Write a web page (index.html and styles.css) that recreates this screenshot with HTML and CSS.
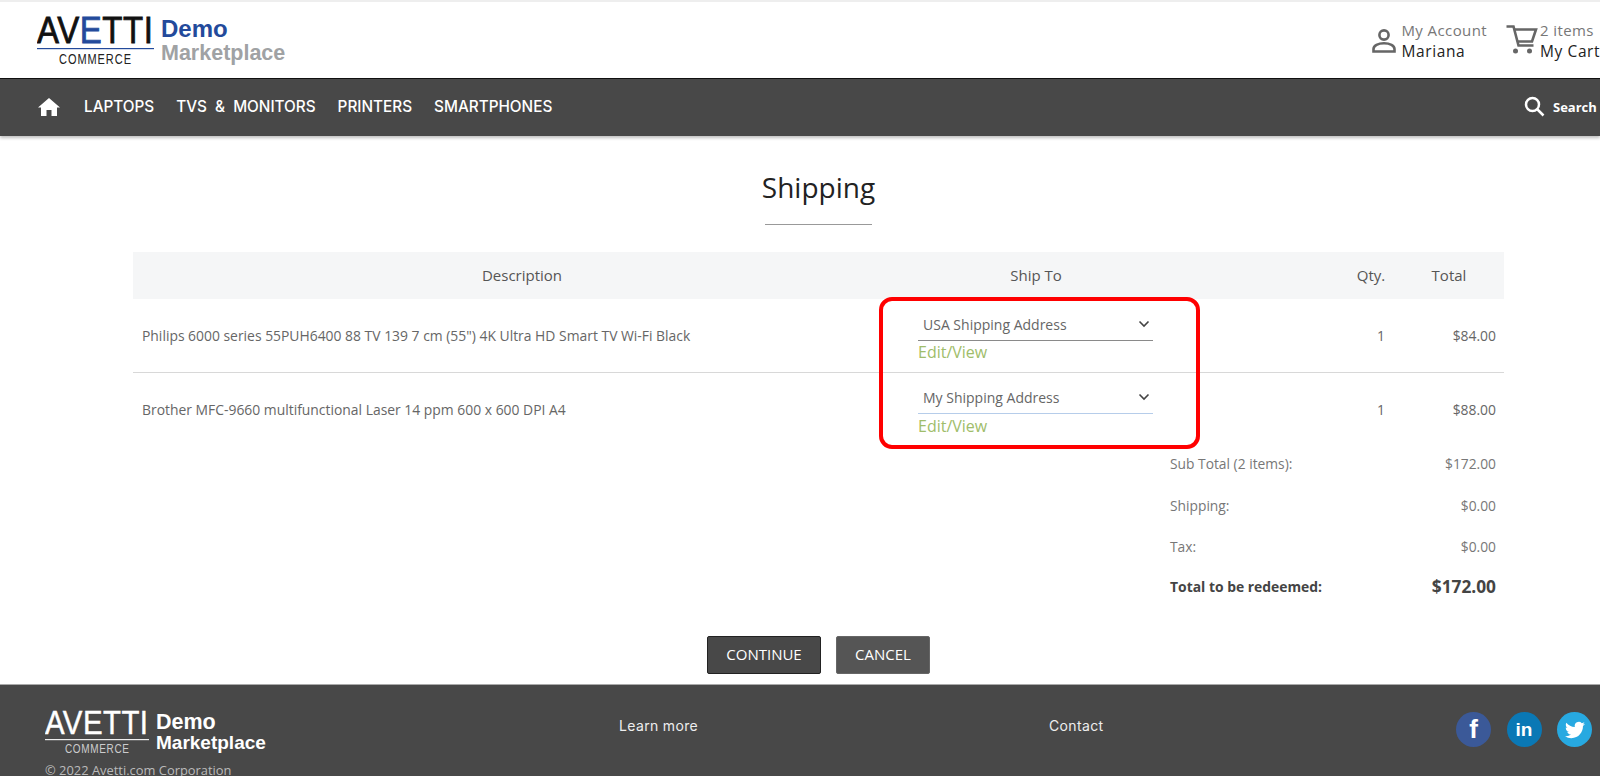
FILE: index.html
```html
<!DOCTYPE html>
<html lang="en">
<head>
<meta charset="utf-8">
<title>Shipping</title>
<link rel="stylesheet" href="styles.css">
</head>
<body>
<div class="page">
  <header class="header">
    <div class="brand">
      <div class="logo">
        <svg class="logo-svg" width="117" height="60" viewBox="0 0 117 60">
          <text class="logo-word" transform="translate(0 36) scale(1 1.1)" textLength="116" lengthAdjust="spacing">AV<tspan class="logo-e">E</tspan>TTI</text>
          <rect class="logo-rule" x="0" y="41" width="117" height="1.200"></rect>
          <text class="logo-sub" transform="translate(22 57) scale(1 1.3)" textLength="72" lengthAdjust="spacing">COMMERCE</text>
        </svg>
      </div>
      <div class="brand-text">
        <div class="brand-demo">Demo</div>
        <div class="brand-market">Marketplace</div>
      </div>
    </div>
    <div class="account">
      <svg class="icon-user" width="26" height="26" viewBox="0 0 26 26"><circle cx="13" cy="7" r="4.600"></circle><path d="M2.500 23.500v-2.500c0-3.400 4.500-5.800 10.500-5.800s10.500 2.400 10.500 5.800v2.500z"></path></svg>
      <div class="stack">
        <div class="stack-top">My Account</div>
        <div class="stack-bottom">Mariana</div>
      </div>
    </div>
    <div class="cart">
      <svg class="icon-cart" width="32" height="32" viewBox="0 0 32 32"><path d="M.5 1.500h7l5 19h15"></path><path d="M9 4.500h21l-4 12H12"></path><circle cx="9.500" cy="26" r="2.500" class="dot"></circle><circle cx="23.500" cy="26" r="2.500" class="dot"></circle></svg>
      <div class="stack">
        <div class="stack-top">2 items</div>
        <div class="stack-bottom">My Cart</div>
      </div>
    </div>
  </header>

  <nav class="nav">
    <svg class="icon-home" width="22" height="18" viewBox="0 0 22 18"><path d="M11 0 22 9.500h-3V18h-5.500v-6h-5v6H3V9.500H0z"></path></svg>
    <a class="nav-link">LAPTOPS</a>
    <a class="nav-link nav-wide">TVS &amp; MONITORS</a>
    <a class="nav-link">PRINTERS</a>
    <a class="nav-link">SMARTPHONES</a>
    <div class="search">
      <svg class="icon-search" width="21" height="21" viewBox="0 0 21 21"><circle cx="8.500" cy="8.500" r="6.500"></circle><path d="m13.500 13.500 6 6"></path></svg>
      <span class="search-label">Search</span>
    </div>
  </nav>

  <main class="main">
    <h1 class="title">Shipping</h1>
    <div class="title-rule"></div>

    <div class="table">
      <div class="row row-head">
        <div class="cell center">Description</div>
        <div class="cell center">Ship To</div>
        <div></div>
        <div class="cell center">Qty.</div>
        <div class="cell center">Total</div>
      </div>
      <div class="row row-item row-line">
        <div class="cell desc">Philips 6000 series 55PUH6400 88 TV 139 7 cm (55") 4K Ultra HD Smart TV Wi-Fi Black</div>
        <div class="shipto">
          <div class="select">
            <span>USA Shipping Address</span>
            <svg class="chevron" width="12" height="8" viewBox="0 0 12 8"><path d="m1.500 1.500 4.500 4.500 4.500-4.500"></path></svg>
          </div>
          <a class="edit">Edit/View</a>
        </div>
        <div></div>
        <div class="cell qty">1</div>
        <div class="cell money">$84.00</div>
      </div>
      <div class="row row-item">
        <div class="cell desc">Brother MFC-9660 multifunctional Laser 14 ppm 600 x 600 DPI A4</div>
        <div class="shipto shipto-second">
          <div class="select select-focus">
            <span>My Shipping Address</span>
            <svg class="chevron" width="12" height="8" viewBox="0 0 12 8"><path d="m1.500 1.500 4.500 4.500 4.500-4.500"></path></svg>
          </div>
          <a class="edit edit-second">Edit/View</a>
        </div>
        <div></div>
        <div class="cell qty">1</div>
        <div class="cell money">$88.00</div>
      </div>
      <div class="highlight"></div>
    </div>

    <div class="summary">
      <div class="sum-row sum-sub"><span>Sub Total (2 items):</span><span>$172.00</span></div>
      <div class="sum-row sum-ship"><span>Shipping:</span><span>$0.00</span></div>
      <div class="sum-row sum-tax"><span>Tax:</span><span>$0.00</span></div>
      <div class="sum-row sum-total"><span>Total to be redeemed:</span><span class="sum-total-value">$172.00</span></div>
    </div>

    <div class="actions">
      <button class="btn btn-primary">CONTINUE</button>
      <button class="btn btn-secondary">CANCEL</button>
    </div>
  </main>

  <footer class="footer">
    <div class="foot-brand">
      <div class="foot-logo-row">
        <svg class="foot-logo" width="104" height="54" viewBox="0 0 104 54">
          <text class="foot-word" transform="translate(0 33) scale(1 1.1)" textLength="103" lengthAdjust="spacing">AVETTI</text>
          <rect class="foot-rule" x="0" y="38" width="104" height="1.200"></rect>
          <text class="foot-sub" transform="translate(20 52) scale(1 1.3)" textLength="64" lengthAdjust="spacing">COMMERCE</text>
        </svg>
        <div class="foot-text">
          <div class="foot-demo">Demo</div>
          <div class="foot-market">Marketplace</div>
        </div>
      </div>
      <div class="copyright">© 2022 Avetti.com Corporation</div>
    </div>
    <a class="foot-link foot-learn">Learn more</a>
    <a class="foot-link foot-contact">Contact</a>
    <div class="social">
      <span class="soc soc-fb">f</span>
      <span class="soc soc-in">in</span>
      <span class="soc soc-tw"><svg width="20" height="20" viewBox="0 0 24 24"><path d="M23.953 4.570a10 10 0 0 1-2.825.775 4.958 4.958 0 0 0 2.163-2.723c-.951.555-2.005.959-3.127 1.184a4.920 4.920 0 0 0-8.384 4.482C7.690 8.095 4.067 6.130 1.640 3.162a4.822 4.822 0 0 0-.666 2.475c0 1.710.870 3.213 2.188 4.096a4.904 4.904 0 0 1-2.228-.616v.060a4.923 4.923 0 0 0 3.946 4.827 4.996 4.996 0 0 1-2.212.085 4.936 4.936 0 0 0 4.604 3.417 9.867 9.867 0 0 1-6.102 2.105c-.390 0-.779-.023-1.170-.067a13.995 13.995 0 0 0 7.557 2.209c9.053 0 13.998-7.496 13.998-13.985 0-.210 0-.420-.015-.630A9.935 9.935 0 0 0 24 4.590z"></path></svg></span>
    </div>
  </footer>
</div>
</body>
</html>
```
FILE: styles.css
```css
* { box-sizing: border-box; }
html, body { margin: 0; height: 776px; overflow: hidden; background: #fff; }
body { font-family: "Open Sans", "Liberation Sans", sans-serif; color: #666; }
.page { width: 1600px; height: 776px; overflow: hidden; display: flex; flex-direction: column; }

/* header */
.header { height: 79px; flex: none; border-top: 2px solid #eeeeee; border-bottom: 1px solid #111; display: flex; align-items: flex-start; padding-left: 37px; background: #fff; }
.brand { display: flex; gap: 7px; padding-top: 5px; margin-right: auto; }
.logo { width: 117px; height: 60px; }
.logo-svg { display: block; }
.logo-word { font-family: "Liberation Sans", sans-serif; font-size: 33px; fill: #111; stroke: #111; stroke-width: .7px; }
.logo-e { fill: #234a9b; stroke: #234a9b; }
.logo-rule { fill: #234a9b; }
.logo-sub { font-family: "Liberation Sans", sans-serif; font-size: 11px; fill: #222; }
.brand-text { font-family: "Liberation Sans", sans-serif; font-weight: 700; display: flex; flex-direction: column; padding-top: 10px; }
.brand-demo { font-size: 24px; line-height: 24px; color: #234a9b; }
.brand-market { font-size: 21.500px; line-height: 25px; color: #a0a2a4; }

.account, .cart { display: flex; align-items: flex-start; padding-top: 18px; }
.account { gap: 4px; margin-right: 19px; }
.cart { gap: 2px; margin-right: -10px; min-width: 104px; }
.icon-user { margin-top: 8px; flex: none; }
.icon-user circle, .icon-user path { fill: none; stroke: #666; stroke-width: 2.600; }
.icon-cart { margin-top: 5px; flex: none; }
.icon-cart path { fill: none; stroke: #666; stroke-width: 2.600; }
.icon-cart .dot { fill: #666; }
.stack-top { font-size: 15px; line-height: 21px; color: #777; letter-spacing: .4px; white-space: nowrap; }
.stack-bottom { font-size: 15.500px; line-height: 20px; color: #222; letter-spacing: .6px; white-space: nowrap; }

/* nav */
.nav { height: 57px; flex: none; background: #484848; box-shadow: 0 2px 3px rgba(0,0,0,.25); display: flex; align-items: center; padding: 0 0 2px 38px; position: relative; }
.icon-home { margin-right: 24px; flex: none; }
.icon-home path { fill: #fff; }
.nav-link { font-family: Inter, sans-serif; font-size: 15.300px; font-weight: 500; color: #fff; margin-right: 22px; white-space: nowrap; }
.nav-wide { word-spacing: 4px; }
.search { margin-left: auto; display: flex; align-items: center; gap: 8px; }
.icon-search { fill: none; stroke: #fff; stroke-width: 2.500; flex: none; }
.search-label { font-size: 13px; font-weight: 700; color: #fff; width: 47px; white-space: nowrap; }

/* main */
.main { flex: 1; padding: 31px 96px 0 133px; display: flex; flex-direction: column; }
.title { margin: 0; font-size: 28px; line-height: 40px; font-weight: 400; color: #222; text-align: center; height: 40px; width: 1371px; }
.title-rule { width: 107px; height: 1px; background: #999; margin: 17px 0 27px 632px; }

.table { position: relative; width: 1371px; }
.row { display: grid; grid-template-columns: 778px 250px 187px 46px 110px; align-items: center; }
.row-head { height: 47px; background: #f5f6f7; font-size: 15px; color: #555; padding-bottom: 2px; }
.row-item { height: 73px; font-size: 13.900px; color: #666; }
.row-line { height: 74px; border-bottom: 1px solid #d8d8d8; }
.center { text-align: center; white-space: nowrap; }
.desc { padding-left: 9px; white-space: nowrap; }
.qty { text-align: right; padding-right: 9px; }
.money { text-align: right; padding-right: 8px; }
.shipto { padding: 11px 8px 0 7px; align-self: start; }
.shipto-second { padding-top: 10px; }
.select { height: 31px; border-bottom: 1px solid #8a8a8a; display: flex; align-items: center; justify-content: space-between; padding: 0 3px 2px 5px; font-size: 14px; color: #666; }
.select-focus { border-bottom: 1px solid #b6cdea; }
.chevron { fill: none; stroke: #444; stroke-width: 1.600; }
.edit { display: block; font-size: 16px; line-height: 23px; color: #a0bd6a; }
.edit-second { padding-top: 1px; }
.highlight { position: absolute; left: 746px; top: 45px; width: 321px; height: 152px; border: 4px solid #f00; border-radius: 13px; }

/* summary */
.summary { width: 334px; align-self: flex-start; margin-left: 1037px; font-size: 13.800px; color: #777; padding-right: 8px; }
.sum-row { display: flex; justify-content: space-between; align-items: center; }
.sum-sub { height: 35px; }
.sum-ship { height: 49px; }
.sum-tax { height: 33px; }
.sum-total { height: 47px; font-weight: 700; color: #444; font-size: 13.900px; }
.sum-total-value { font-size: 17.300px; }

.actions { display: flex; gap: 15px; padding-left: 574px; margin-top: 26px; }
.btn { height: 38px; border-radius: 2px; color: #fff; font: 15px "Open Sans", sans-serif; padding: 0 0 2px; }
.btn-primary { width: 114px; background: #484848; border: 1px solid #222; }
.btn-secondary { width: 94px; background: #555; border: 1px solid #666; }

/* footer */
.footer { height: 92px; flex: none; background: #484848; border-top: 1px solid #aaa; display: flex; align-items: flex-start; padding-left: 45px; position: relative; }
.foot-brand { width: 574px; padding-top: 16px; flex: none; }
.foot-logo-row { display: flex; gap: 7px; height: 54px; }
.foot-logo { display: block; flex: none; }
.foot-word { font-family: "Liberation Sans", sans-serif; font-size: 29.400px; fill: #fff; stroke: #fff; stroke-width: .4px; }
.foot-rule { fill: #eee; }
.foot-sub { font-family: "Liberation Sans", sans-serif; font-size: 10px; fill: #ccc; }
.foot-text { font-family: "Liberation Sans", sans-serif; font-weight: 700; color: #fff; padding-top: 10px; }
.foot-demo { font-size: 21.500px; line-height: 22px; }
.foot-market { font-size: 19px; line-height: 20px; }
.copyright { font-size: 12.900px; line-height: 18px; color: #bbb; margin-top: 6px; white-space: nowrap; }
.foot-link { font-family: Inter, sans-serif; font-size: 14px; letter-spacing: .35px; color: #eee; padding-top: 32px; white-space: nowrap; }
.foot-learn { width: 430px; }
.social { display: flex; gap: 15.500px; margin-left: auto; margin-right: 8px; padding-top: 27px; }
.soc { width: 35px; height: 35px; border-radius: 50%; display: flex; align-items: center; justify-content: center; color: #fff; font-family: "Liberation Sans", sans-serif; font-weight: 700; }
.soc-fb { background: #3b5998; font-size: 26px; }
.soc-in { background: #0a78b5; font-size: 19px; }
.soc-tw { background: #27a9e1; }
.soc-tw path { fill: #fff; }
```
